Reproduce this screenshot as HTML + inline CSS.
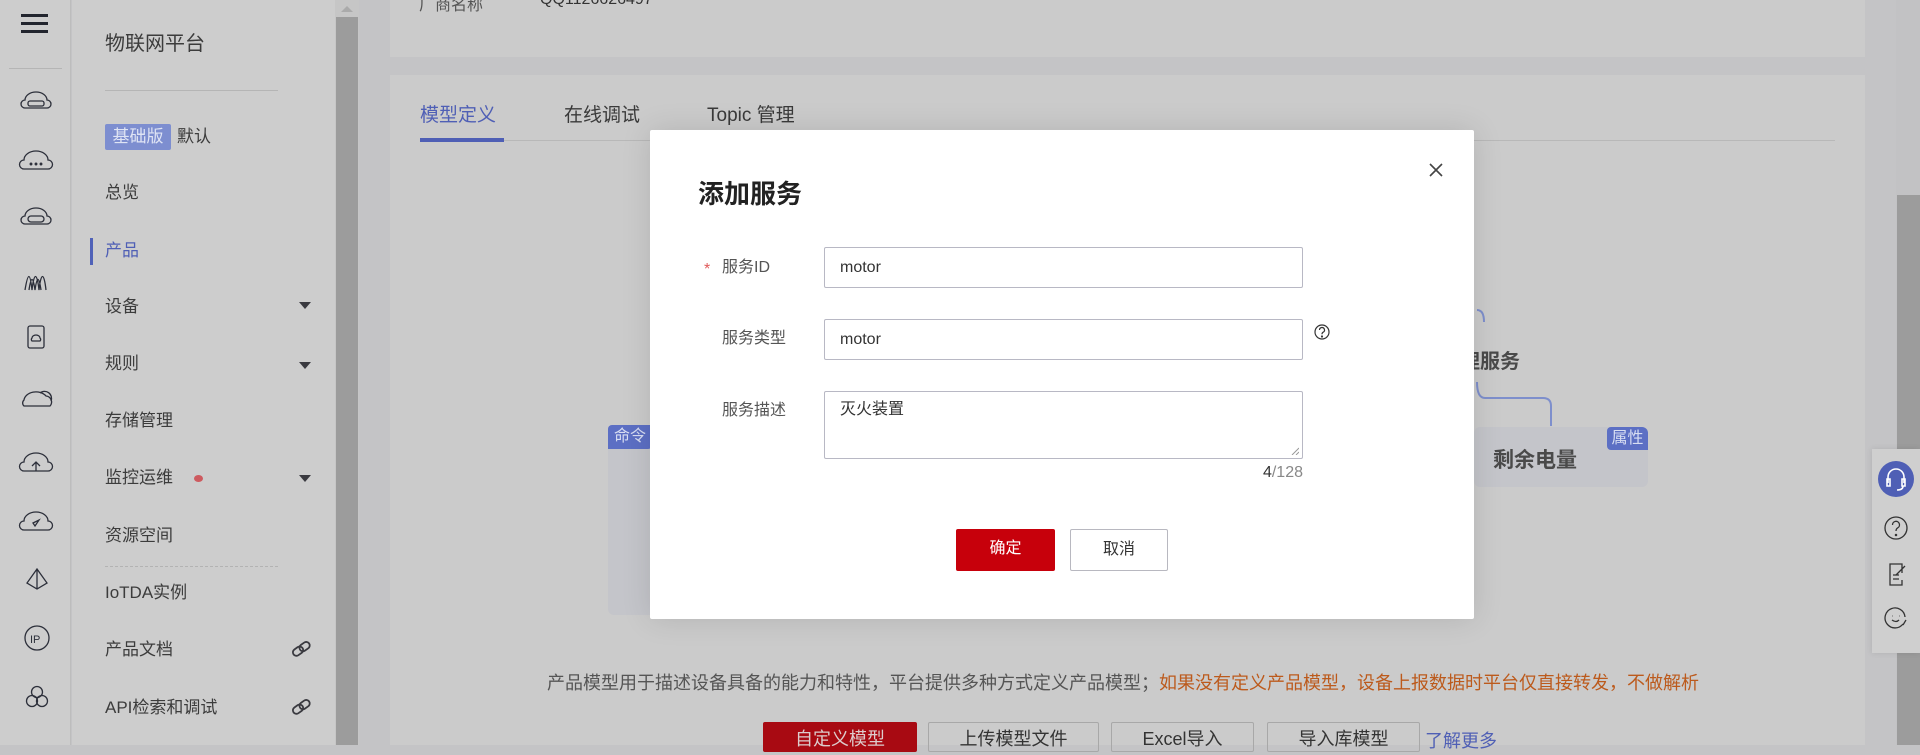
<!DOCTYPE html>
<html><head><meta charset="utf-8"><style>
*{margin:0;padding:0;box-sizing:border-box}
body{width:1920px;height:745px;overflow:hidden;background:#c4c4c6;font-family:"Liberation Sans","Noto Sans CJK SC",sans-serif;position:relative;color:#3a3a3a}
.abs{position:absolute}
.strip{left:0;top:0;width:71px;height:745px;background:#cdcdcd;border-right:1px solid #bdbdbd}
.menu{left:72px;top:0;width:263px;height:745px;background:#cdcdcd}
.sb{left:335px;top:0;width:24px;height:745px;background:#c6c6c6}
.mi{position:absolute;left:105px;font-size:17px;color:#3c3c3c;line-height:20px;transform:translateY(-10px)}
.caret{position:absolute;left:299px;width:0;height:0;border-left:6px solid transparent;border-right:6px solid transparent;border-top:7px solid #3a3a40}
.panel{background:#cbcbcb}
.modal{left:650px;top:130px;width:824px;height:489px;background:#fff;border-radius:2px;box-shadow:0 0 30px rgba(0,0,0,.12)}
.lbl{position:absolute;font-size:16px;color:#555;line-height:20px}
.inp{position:absolute;left:174px;width:479px;border:1px solid #b8b8c4;border-radius:2px;font-size:16px;color:#333;padding-left:15px}
.btn{position:absolute;height:42px;font-size:16px;line-height:40px;text-align:center;border-radius:2px}
.bb{position:absolute;top:722px;height:30px;border:1px solid #a8a8a8;border-radius:2px;font-size:18px;text-align:center;line-height:32px;color:#333}
</style></head><body>
<div class="abs strip"></div>
<div class="abs menu"></div>
<div class="abs sb"><div class="abs" style="left:6px;top:6px;border-left:6px solid transparent;border-right:6px solid transparent;border-bottom:6px solid #aaa"></div><div class="abs" style="left:1px;top:17px;width:22px;height:728px;background:#9c9c9c"></div></div>
<div class="abs" style="left:21px;top:14px;width:27px;height:3px;background:#22252e"></div>
<div class="abs" style="left:21px;top:22px;width:27px;height:3px;background:#22252e"></div>
<div class="abs" style="left:21px;top:30px;width:27px;height:3px;background:#22252e"></div>
<div class="abs" style="left:9px;top:68px;width:53px;height:1px;background:#b5b5b5"></div>
<svg class="abs" style="left:0;top:0" width="71" height="745" fill="none" stroke="#2c2f3a" stroke-width="1.3">
<path d="M25 100a11 8 0 0 1 22 0a4 4 0 0 1 0 8h-22a4 4 0 0 1 0-8z"/><rect x="28" y="101" width="16" height="5" rx="2"/>
<path d="M24 160a12 9 0 0 1 24 0a4 4 0 0 1 0 9h-24a4 4 0 0 1 0-9z"/><circle cx="31" cy="164" r=".8"/><circle cx="36" cy="164" r=".8"/><circle cx="41" cy="164" r=".8"/>
<path d="M25 216a11 8 0 0 1 22 0a4 4 0 0 1 0 8h-22a4 4 0 0 1 0-8z"/><rect x="28" y="216" width="16" height="6" rx="3"/>
<path d="M25 290c3-18 5-18 7 0c2-18 5-18 7 0c2-18 5-18 7 0M29 290c2-14 4-14 6 0c2-14 4-14 6 0"/>
<rect x="28" y="326" width="16" height="22" rx="2"/><path d="M32 338a4 3 0 0 1 8 0a2 2 0 0 1 0 3h-8a2 2 0 0 1 0-3z"/>
<path d="M24 400a12 9 0 0 1 22-4a6 6 0 0 1 4 10h-26a4 4 0 0 1 0-6z"/><path d="M40 393a7 7 0 0 1 11 8"/>
<path d="M24 462a12 9 0 0 1 24 0a4 4 0 0 1 0 9h-24a4 4 0 0 1 0-9z"/><path d="M36 471v-9m-4 4l4-4l4 4"/>
<path d="M24 521a12 9 0 0 1 24 0a4 4 0 0 1 0 9h-24a4 4 0 0 1 0-9z"/><path d="M33 523l6-3l-4 6z"/>
<path d="M37 569l-10 14l10 6l10-6zM37 569v20"/>
<circle cx="37" cy="638" r="12"/><text x="30" y="643" font-size="11" fill="#2c2f3a" stroke="none" font-family="Liberation Sans">IP</text>
<circle cx="37" cy="692" r="5.5"/><circle cx="32" cy="701" r="5.5"/><circle cx="42" cy="701" r="5.5"/>
</svg>
<div class="mi" style="top:44px;font-size:20px">物联网平台</div>
<div class="abs" style="left:105px;top:90px;width:173px;height:1px;background:#b5b5b5"></div>
<div class="abs" style="left:105px;top:124px;width:66px;height:26px;background:#7d8ed0;border-radius:2px;color:#dfe4f4;font-size:17px;line-height:26px;text-align:center">基础版</div>
<div class="mi" style="left:177px;top:137px">默认</div>
<div class="mi" style="top:193px">总览</div>
<div class="abs" style="left:90px;top:238px;width:3px;height:27px;background:#5062b8"></div>
<div class="mi" style="top:251px;color:#4f5fb5">产品</div>
<div class="mi" style="top:307px">设备</div><div class="caret" style="top:302px"></div>
<div class="mi" style="top:364px">规则</div><div class="caret" style="top:362px"></div>
<div class="mi" style="top:421px">存储管理</div>
<div class="mi" style="top:478px">监控运维</div>
<div class="abs" style="left:194px;top:475px;width:9px;height:7px;border-radius:50%;background:#cd5a5f"></div>
<div class="caret" style="top:475px"></div>
<div class="mi" style="top:536px">资源空间</div>
<div class="abs" style="left:105px;top:566px;width:173px;border-top:1px dashed #b3b3b3"></div>
<div class="mi" style="top:593px">IoTDA实例</div>
<div class="mi" style="top:650px">产品文档</div>
<div class="mi" style="top:708px">API检索和调试</div>
<svg class="abs" style="left:290px;top:637px" width="24" height="90" fill="none" stroke="#3a3a40" stroke-width="1.8">
<g transform="rotate(-35 12 12)"><rect x="2" y="8" width="11" height="7" rx="3.5"/><rect x="10" y="8" width="11" height="7" rx="3.5"/></g>
<g transform="translate(0 58) rotate(-35 12 12)"><rect x="2" y="8" width="11" height="7" rx="3.5"/><rect x="10" y="8" width="11" height="7" rx="3.5"/></g></svg>
<div class="abs panel" style="left:390px;top:0;width:1475px;height:57px"></div>
<div class="abs" style="left:419px;top:-9px;font-size:16px;color:#555">厂商名称</div>
<div class="abs" style="left:540px;top:-9px;font-size:16px;color:#333">QQ1126626497</div>
<div class="abs panel" style="left:390px;top:75px;width:1475px;height:670px"></div>
<div class="abs" style="left:420px;top:100px;font-size:19px;color:#4f5fb5">模型定义</div>
<div class="abs" style="left:564px;top:100px;font-size:19px;color:#3a3a3a">在线调试</div>
<div class="abs" style="left:707px;top:100px;font-size:19px;color:#3a3a3a">Topic 管理</div>
<div class="abs" style="left:420px;top:140px;width:1415px;height:1px;background:#b8b8b8"></div>
<div class="abs" style="left:420px;top:138px;width:84px;height:4px;background:#4f5fb5"></div>
<div class="abs" style="left:608px;top:425px;width:100px;height:190px;background:#c4c5ca;border-radius:6px"></div>
<div class="abs" style="left:608px;top:425px;width:44px;height:24px;background:#5c6fc4;color:#d8def2;font-size:16px;line-height:24px;text-align:center;border-radius:4px 0 4px 0">命令</div>
<svg class="abs" style="left:1470px;top:300px" width="100" height="130" fill="none" stroke="#7e8fcc" stroke-width="2"><path d="M7 10q7 0 7 12M7 82q0 16 8 16h58q8 0 8 8v20"/></svg>
<div class="abs" style="left:1460px;top:345px;font-size:20px;font-weight:bold;color:#4a4a4a">理服务</div>
<div class="abs" style="left:1474px;top:427px;width:174px;height:60px;background:#c4c5ca;border-radius:6px"></div>
<div class="abs" style="left:1607px;top:427px;width:41px;height:23px;background:#5c6fc4;color:#d8def2;font-size:16px;line-height:23px;text-align:center;border-radius:4px 6px 0 4px">属性</div>
<div class="abs" style="left:1493px;top:444px;font-size:21px;font-weight:bold;color:#4a4a4a">剩余电量</div>
<div class="abs" style="left:547px;top:669px;font-size:18px;color:#555;white-space:nowrap">产品模型用于描述设备具备的能力和特性，平台提供多种方式定义产品模型；<span style="color:#bc5a1c">如果没有定义产品模型，设备上报数据时平台仅直接转发，不做解析</span></div>
<div class="bb" style="left:763px;width:154px;background:#a80a12;border-color:#a80a12;color:#dcc">自定义模型</div>
<div class="bb" style="left:928px;width:171px">上传模型文件</div>
<div class="bb" style="left:1111px;width:143px">Excel导入</div>
<div class="bb" style="left:1267px;width:153px">导入库模型</div>
<div class="abs" style="left:1425px;top:727px;font-size:18px;color:#4f5fb5">了解更多</div>
<div class="abs" style="left:1896px;top:0;width:24px;height:745px;background:#c2c2c4"></div>
<div class="abs" style="left:1897px;top:195px;width:23px;height:550px;background:#9c9c9c"></div>
<div class="abs" style="left:1872px;top:449px;width:48px;height:204px;background:#cfcfcf;box-shadow:0 0 6px rgba(0,0,0,.1)"></div>
<div class="abs" style="left:1878px;top:461px;width:36px;height:36px;border-radius:50%;background:#4f5fb5"></div>
<svg class="abs" style="left:1872px;top:449px" width="48" height="204" fill="none" stroke="#fff" stroke-width="1.6"><path d="M16 34v-6a8 8 0 0 1 16 0v6M15 30h3v7h-3zM30 30h3v7h-3zM31 37q0 4-6 4"/><g stroke="#333" stroke-width="1.3"><circle cx="24" cy="79" r="11"/><path d="M20.5 76a3.5 3.5 0 1 1 5 3c-1.5 1-1.5 2-1.5 3"/><circle cx="24" cy="86" r=".6"/><path d="M30 124v-9h-12v21h12v-5M21 126h6M21 130h6M24 126l9-9"/><path d="M33 168a10 10 0 1 0-2 7M20 167h.5M27 167h.5M20 171q4 3 7 0M31 176l3-5"/></g></svg>
<div class="abs modal">
<div class="abs" style="left:48px;top:44px;font-size:26px;font-weight:bold;color:#222">添加服务</div>
<svg class="abs" style="left:778px;top:32px" width="16" height="16" stroke="#444" stroke-width="1.6"><path d="M2 2l12 12M14 2l-12 12"/></svg>
<div class="lbl" style="left:54px;top:130px;color:#e05a5a">*</div>
<div class="lbl" style="left:72px;top:128px">服务ID</div>
<div class="inp" style="top:117px;height:41px;line-height:39px">motor</div>
<div class="lbl" style="left:72px;top:199px">服务类型</div>
<div class="inp" style="top:189px;height:41px;line-height:39px">motor</div>
<svg class="abs" style="left:664px;top:193px" width="16" height="18" fill="none" stroke="#333" stroke-width="1.2"><circle cx="8" cy="9" r="7"/><path d="M5.5 7a2.5 2.5 0 1 1 3.5 2.3c-1 .5-1 1-1 2"/><circle cx="8" cy="13.5" r=".5"/></svg>
<div class="lbl" style="left:72px;top:271px">服务描述</div>
<div class="inp" style="top:261px;height:68px;padding-top:8px;line-height:20px">灭火装置
<svg class="abs" style="right:3px;bottom:3px" width="8" height="8" stroke="#999" stroke-width="1"><path d="M1 8L8 1M5 8L8 5"/></svg></div>
<div class="abs" style="left:596px;top:334px;width:57px;text-align:right;font-size:16px;color:#888"><span style="color:#333">4</span>/128</div>
<div class="btn" style="left:306px;top:399px;width:99px;background:#c7000b;color:#fff">确定</div>
<div class="btn" style="left:420px;top:399px;width:98px;border:1px solid #b8b8c0;color:#333">取消</div>
</div>
</body></html>
